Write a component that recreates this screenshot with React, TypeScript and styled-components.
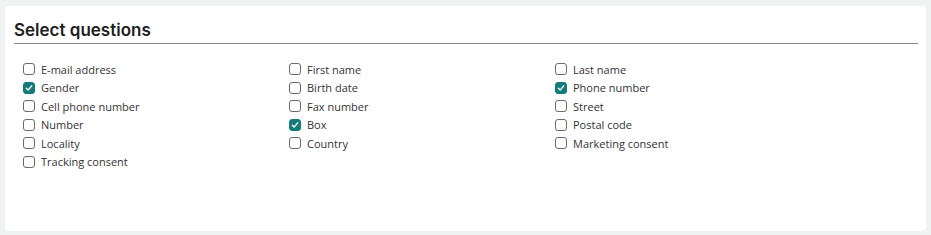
import React from "react";
import styled, { createGlobalStyle } from "styled-components";

const GlobalStyle = createGlobalStyle`
  html, body {
    margin: 0;
    padding: 0;
    background: #f1f2f2;
  }
  body {
    font-family: "Open Sans", "Lato", sans-serif;
  }
`;

const Page = styled.div`
  padding: 6px 5px 4px 5px;
  height: 235px;
  box-sizing: border-box;
`;

const Card = styled.section`
  background: #fff;
  border-radius: 4px;
  height: 100%;
  padding: 13px 8px 0 9px;
  box-sizing: border-box;
`;

const Title = styled.h2`
  margin: 0;
  font-family: "Inter", "Lato", sans-serif;
  font-size: 17px;
  font-weight: 600;
  color: #1e1e1e;
  line-height: 22px;
  padding-bottom: 2px;
  border-bottom: 1px solid #888;
`;

const Grid = styled.div`
  display: grid;
  grid-template-columns: repeat(3, 266px);
  grid-auto-rows: 18.5px;
  padding: 16px 0 0 9px;
`;

const Option = styled.label`
  display: flex;
  align-items: center;
  gap: 6px;
  font-size: 11px;
  color: #333;
  cursor: pointer;
`;

const Box = styled.span<{ $checked: boolean }>`
  width: 12px;
  height: 12px;
  border-radius: 3px;
  box-sizing: border-box;
  border: 1px solid ${(p) => (p.$checked ? "#137c78" : "#6b6b6b")};
  background: ${(p) => (p.$checked ? "#137c78" : "#fff")};
  display: flex;
  align-items: center;
  justify-content: center;
  flex-shrink: 0;
`;

const columns = [
  [
    ["E-mail address", false],
    ["Gender", true],
    ["Cell phone number", false],
    ["Number", false],
    ["Locality", false],
    ["Tracking consent", false],
  ],
  [
    ["First name", false],
    ["Birth date", false],
    ["Fax number", false],
    ["Box", true],
    ["Country", false],
  ],
  [
    ["Last name", false],
    ["Phone number", true],
    ["Street", false],
    ["Postal code", false],
    ["Marketing consent", false],
  ],
] as [string, boolean][][];

// row-major order for the grid
const items: ([string, boolean] | null)[] = [];
for (let r = 0; r < 6; r++) {
  for (let c = 0; c < 3; c++) {
    items.push(columns[c][r] ?? null);
  }
}

const Check = () => (
  <svg width="8" height="8" viewBox="0 0 8 8">
    <path d="M1.3 4.2 L3.2 6 L6.7 1.8" fill="none" stroke="#fff" strokeWidth="1.3" strokeLinecap="round" strokeLinejoin="round" />
  </svg>
);

const App: React.FC = () => (
  <>
    <GlobalStyle />
    <Page>
      <Card>
        <Title>Select questions</Title>
        <Grid>
          {items.map((item, i) =>
            item ? (
              <Option key={i}>
                <Box $checked={item[1]}>{item[1] && <Check />}</Box>
                {item[0]}
              </Option>
            ) : (
              <span key={i} />
            )
          )}
        </Grid>
      </Card>
    </Page>
  </>
);

export default App;
